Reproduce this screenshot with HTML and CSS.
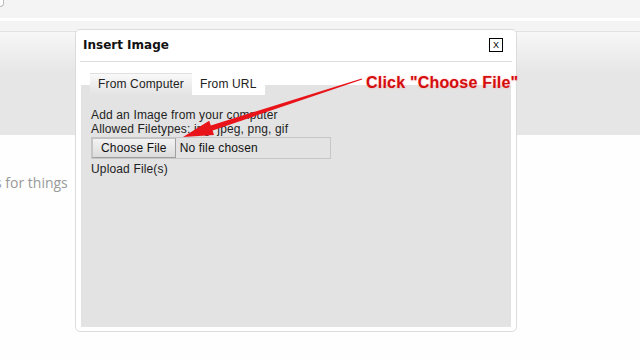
FILE: index.html
```html
<!DOCTYPE html>
<html lang="en">
<head>
<meta charset="UTF-8">
<meta name="viewport" content="width=device-width, initial-scale=1.0">
<title>Insert Image</title>
<link rel="stylesheet" href="styles.css">
</head>
<body>

<div id="page">
    <div class="topbar"><div class="search"></div></div>
    <div class="gap"></div>
    <div class="subbar"></div>
    <div class="band"></div>
    <div class="content">
        <p class="teaser">s for things</p>
    </div>
</div>

<div id="dialog">
    <div class="dialog-head">
        <span class="dialog-title">Insert Image</span>
        <span class="close">X</span>
    </div>
    <div class="dialog-body">
        <div class="tabs">
            <span class="tab active">From Computer</span>
            <span class="tab">From URL</span>
        </div>
        <div class="panel">
            <div class="line">Add an Image from your computer</div>
            <div class="line">Allowed Filetypes: jpg, jpeg, png, gif</div>
            <div class="filebox">
                <span class="choose">Choose File</span>
                <span class="nofile">No file chosen</span>
            </div>
            <div class="line upload">Upload File(s)</div>
        </div>
    </div>
</div>

<!-- tutorial annotation drawn over the screenshot -->
<svg class="arrow" width="640" height="360" viewBox="0 0 640 360">
    <polygon points="362.2,79.6 212.6,130.4 214,135 183,137 209.2,120.8 210.8,125.4 361.8,78.4" fill="#e8141a"/>
</svg>
<span class="callout">Click "Choose File"</span>

</body>
</html>
```

FILE: styles.css
```css
body {
    margin: 0;
    padding: 0;
    background-color: #fefefe;
    font-family: "Liberation Sans", Arial, sans-serif;
    font-size: 12px;
    color: #222;
    width: 640px;
    height: 360px;
    overflow: hidden;
    position: relative;
}
.topbar {
    height: 18px;
    background-color: #f4f4f4;
}
.search {
    width: 3px;
    height: 6px;
    background-color: #fff;
    border-right: 1px solid #bbb;
    border-bottom: 1px solid #bbb;
    border-bottom-right-radius: 4px;
}
.gap {
    height: 3px;
    background-color: #fff;
}
.subbar {
    height: 10px;
    background-color: #f4f4f4;
    border-bottom: 1px solid #e2e2e2;
}
.band {
    height: 103px;
    background: linear-gradient(to bottom, #f7f7f7 0%, #e6e6e6 40%, #e6e6e6 100%);
}
.content {
    padding-top: 38px;
}
.teaser {
    margin: 0;
    font-family: "Open Sans", sans-serif;
    font-size: 14px;
    line-height: 19px;
    color: #999;
    text-indent: -5px;
}
#dialog {
    position: absolute;
    left: 75px;
    top: 29px;
    width: 442px;
    height: 303px;
    box-sizing: border-box;
    background-color: #fff;
    border: 1px solid #dcdcdc;
    border-radius: 5px;
    display: flex;
    flex-direction: column;
}
.dialog-head {
    margin: 0 4px;
    padding: 7px 9px 8px 3px;
    border-bottom: 1px solid #dedede;
    display: flex;
    justify-content: space-between;
    align-items: center;
}
.dialog-title {
    font-family: "DejaVu Sans", Verdana, sans-serif;
    font-weight: bold;
    font-size: 12px;
    line-height: 16px;
    color: #111;
}
.close {
    width: 14px;
    height: 14px;
    box-sizing: border-box;
    border: 1px solid #000;
    font-size: 9px;
    line-height: 12px;
    text-align: center;
    color: #000;
}
.dialog-body {
    flex: 1;
    margin: 11px 5px 4px;
    display: flex;
    flex-direction: column;
    letter-spacing: 0.15px;
    background: linear-gradient(to bottom, transparent 12px, #e3e3e3 12px);
}
.tabs {
    display: flex;
    margin-left: 9px;
}
.tab {
    height: 22px;
    line-height: 22px;
    padding: 0 8px;
    background-color: #fff;
}
.tab.active {
    height: 21px;
    line-height: 21px;
    border-top: 1px solid #e0e0e0;
    padding: 0 8px 0 8px;
    background: linear-gradient(to bottom, #f9f9f9, #e3e3e3);
}
.panel {
    padding: 13px 10px;
}
.line {
    line-height: 14px;
}
.filebox {
    margin-top: 1px;
    width: 240px;
    height: 22px;
    box-sizing: border-box;
    border: 1px solid #c6c6c6;
    display: flex;
    align-items: center;
}
.choose {
    height: 20px;
    box-sizing: border-box;
    line-height: 18px;
    padding: 0 8px;
    border: 1px solid #a0a0a0;
    border-top-color: #c4c4c4;
    border-left-color: #c4c4c4;
    background: linear-gradient(to bottom, #f3f3f3, #dcdcdc);
    color: #111;
}
.nofile {
    margin-left: 4px;
    color: #111;
}
.upload {
    margin-top: 3px;
}
.arrow {
    position: absolute;
    left: 0;
    top: 0;
    pointer-events: none;
}
.callout {
    position: absolute;
    left: 366px;
    top: 74px;
    font-family: "Liberation Sans", Arial, sans-serif;
    font-weight: bold;
    font-size: 16px;
    letter-spacing: 0.2px;
    line-height: 18px;
    color: #d40d0d;
    text-shadow: 0 0 2px rgba(255, 120, 120, 0.6);
    white-space: nowrap;
}
```
